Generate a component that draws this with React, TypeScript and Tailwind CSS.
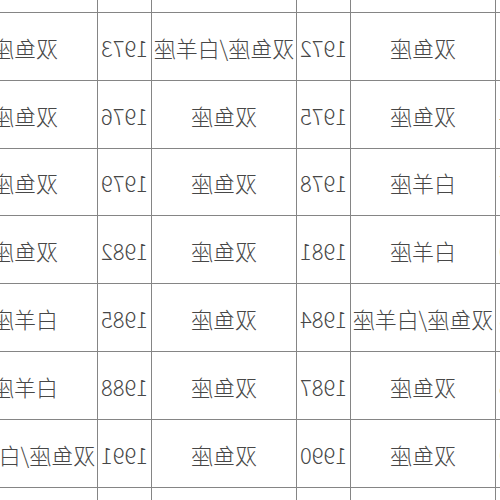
const rows: string[][] = [
  ["1968", "双鱼座", "1969", "双鱼座", "1970", "双鱼座"],
  ["1971", "双鱼座", "1972", "双鱼座/白羊座", "1973", "双鱼座"],
  ["1974", "双鱼座", "1975", "双鱼座", "1976", "双鱼座"],
  ["1977", "白羊座", "1978", "双鱼座", "1979", "双鱼座"],
  ["1980", "白羊座", "1981", "双鱼座", "1982", "双鱼座"],
  ["1983", "双鱼座/白羊座", "1984", "双鱼座", "1985", "白羊座"],
  ["1986", "双鱼座", "1987", "双鱼座", "1988", "白羊座"],
  ["1989", "双鱼座", "1990", "双鱼座", "1991", "双鱼座/白羊座"],
  ["1992", "双鱼座", "1993", "双鱼座", "1994", "双鱼座"],
];

export default function App() {
  return (
    <div className="h-[500px] w-[500px] overflow-hidden bg-white">
      {/* the screenshot is a horizontally mirrored table */}
      <div className="w-[500px] [transform:scaleX(-1)]">
        <div className="-ml-[49px] -mt-[55px] grid w-max grid-cols-[53px_144px_53px_144px_53px_144px] grid-rows-[67px_67px_67px_66px_67px_67px_67px_67px_67px] gap-px bg-[#858585] font-['Noto_Sans_CJK_SC','Noto_Sans',sans-serif] text-[22px] font-light text-[#474747]">
          {rows.flatMap((row, r) =>
            row.map((cell, c) => (
              <div
                key={`${r}-${c}`}
                className="flex items-center justify-center whitespace-nowrap bg-white leading-none"
              >
                {cell}
              </div>
            )),
          )}
        </div>
      </div>
    </div>
  );
}
